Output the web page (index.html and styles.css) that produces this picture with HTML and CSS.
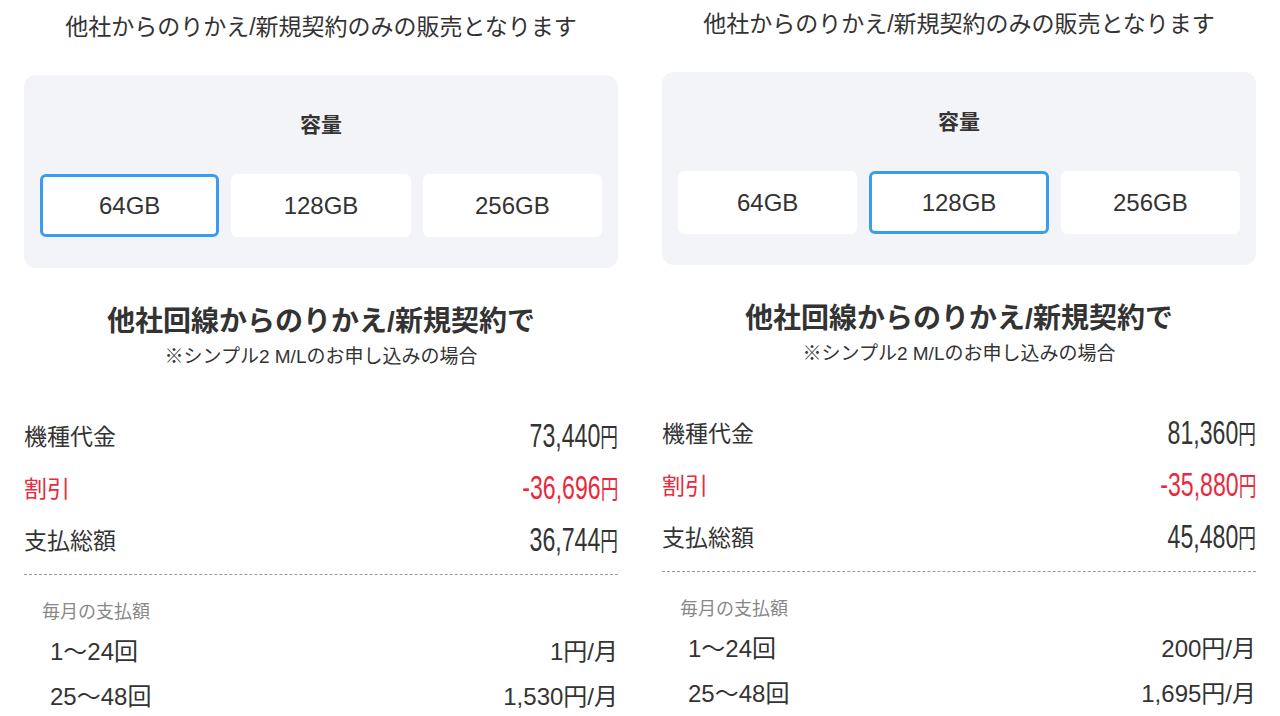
FILE: index.html
```html
<!DOCTYPE html>
<html lang="ja">
<head>
    <meta charset="UTF-8">
    <title>容量と価格</title>
    <link rel="stylesheet" href="styles.css">
</head>
<body>
    <div class="page">
        <div class="plan plan-left">
            <p class="lead">他社からのりかえ/新規契約のみの販売となります</p>
            <div class="capacity">
                <h3>容量</h3>
                <ul class="capacity-list">
                    <li class="on">64GB</li>
                    <li>128GB</li>
                    <li>256GB</li>
                </ul>
            </div>
            <h2>他社回線からのりかえ/新規契約で</h2>
            <p class="note">※シンプル2 M/Lのお申し込みの場合</p>
            <ul class="price">
                <li><span>機種代金</span><b><i>73,440</i><em>円</em></b></li>
                <li class="off"><span>割引</span><b><i>-36,696</i><em>円</em></b></li>
                <li><span>支払総額</span><b><i>36,744</i><em>円</em></b></li>
            </ul>
            <p class="monthly-title">毎月の支払額</p>
            <ul class="monthly">
                <li><span>1〜24回</span><span>1円/月</span></li>
                <li><span>25〜48回</span><span>1,530円/月</span></li>
            </ul>
        </div>
        <div class="plan">
            <p class="lead">他社からのりかえ/新規契約のみの販売となります</p>
            <div class="capacity">
                <h3>容量</h3>
                <ul class="capacity-list">
                    <li>64GB</li>
                    <li class="on">128GB</li>
                    <li>256GB</li>
                </ul>
            </div>
            <h2>他社回線からのりかえ/新規契約で</h2>
            <p class="note">※シンプル2 M/Lのお申し込みの場合</p>
            <ul class="price">
                <li><span>機種代金</span><b><i>81,360</i><em>円</em></b></li>
                <li class="off"><span>割引</span><b><i>-35,880</i><em>円</em></b></li>
                <li><span>支払総額</span><b><i>45,480</i><em>円</em></b></li>
            </ul>
            <p class="monthly-title">毎月の支払額</p>
            <ul class="monthly">
                <li><span>1〜24回</span><span>200円/月</span></li>
                <li><span>25〜48回</span><span>1,695円/月</span></li>
            </ul>
        </div>
    </div>
</body>
</html>
```

FILE: styles.css
```css
body {
    margin: 0;
    background: #fff;
    color: #333;
    font-family: "Liberation Sans", "Noto Sans CJK JP", sans-serif;
}
ul {
    list-style-type: none;
    margin: 0;
    padding: 0;
}
.page {
    display: grid;
    grid-template-columns: 594px 594px;
    column-gap: 44px;
    padding: 0 24px;
    height: 716px;
    overflow: hidden;
}
.plan-left {
    padding-top: 3px;
}
.lead {
    margin: 8px 0 0;
    font-size: 23px;
    line-height: 32px;
    text-align: center;
}
.capacity {
    margin-top: 32px;
    padding: 30px 16px 31px;
    background: #f3f4f7;
    border-radius: 12px;
}
.capacity h3 {
    margin: 0;
    font-size: 21px;
    line-height: 40px;
    text-align: center;
}
.capacity-list {
    display: grid;
    grid-template-columns: 1fr 1fr 1fr;
    gap: 12px;
    margin-top: 29px;
}
.capacity-list li {
    height: 63px;
    line-height: 63px;
    box-sizing: border-box;
    background: #fff;
    border-radius: 6px;
    font-size: 24px;
    text-align: center;
}
.capacity-list .on {
    border: 3px solid #3a9cf0;
    line-height: 57px;
}
h2 {
    margin: 34px 0 0;
    font-size: 28px;
    line-height: 40px;
    text-align: center;
}
.note {
    margin: 2px 0 0;
    font-size: 19px;
    line-height: 26px;
    text-align: center;
}
.price {
    margin-top: 39px;
    padding-bottom: 9px;
    border-bottom: 1px dashed #9a9a9a;
}
.price li {
    display: flex;
    justify-content: space-between;
    align-items: center;
    height: 52px;
    font-size: 23px;
}
.price b {
    display: inline-block;
    font-weight: normal;
    transform: scaleX(0.68);
    transform-origin: right center;
    white-space: nowrap;
}
.price i {
    font-style: normal;
    font-size: 34px;
}
.price em {
    font-style: normal;
    font-size: 26px;
}
.price .off {
    color: #e8293e;
}
.monthly-title {
    margin: 24px 0 0;
    padding-left: 18px;
    font-size: 18px;
    line-height: 26px;
    color: #888;
}
.monthly {
    margin-top: 2px;
}
.monthly li {
    display: flex;
    justify-content: space-between;
    align-items: center;
    height: 45px;
    padding-left: 26px;
    font-size: 24px;
}
```
